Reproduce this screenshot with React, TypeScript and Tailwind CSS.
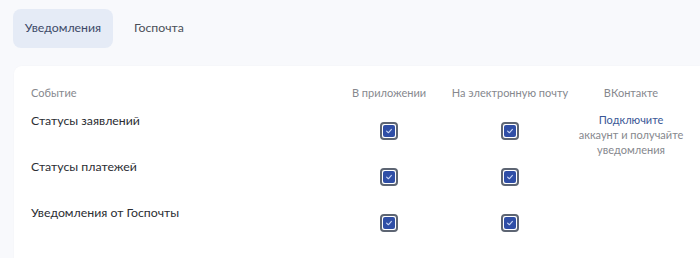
const rows = ['Статусы заявлений', 'Статусы платежей', 'Уведомления от Госпочты'];

function Checkbox() {
  return (
    <span className="flex h-[18px] w-[18px] items-center justify-center rounded-[4px] border-2 border-[#5d6573] bg-white p-[1px]">
      <span className="flex h-full w-full items-center justify-center rounded-[2px] bg-[#2f4ea6]">
        <svg viewBox="0 0 10 10" className="h-[8px] w-[8px]" fill="none">
          <path d="M2 5.2 L4.2 7.2 L8 3" stroke="#c9d6f5" strokeWidth="1.4" strokeLinecap="round" strokeLinejoin="round" />
        </svg>
      </span>
    </span>
  );
}

export default function App() {
  return (
    <div className="h-[258px] w-[700px] overflow-hidden bg-[#f8f9fc] font-['Lato','Noto_Sans',sans-serif]">
      {/* Tabs */}
      <div className="flex gap-[9px] pl-[13px] pt-[9px]">
        <button className="h-[39px] w-[100px] rounded-[8px] bg-[#e5ebf6] text-[12.3px] text-[#3d4a68]">
          Уведомления
        </button>
        <button className="h-[39px] px-[12px] text-[12.3px] text-[#4b4f58]">Госпочта</button>
      </div>

      {/* Card */}
      <div className="ml-[14px] mt-[18px] h-[200px] rounded-tl-[8px] bg-white pl-[17px] pt-[19px] shadow-[0_0_2px_rgba(0,0,0,0.03)]">
        <div className="grid grid-cols-[308px_100px_142px_100px] text-[11px] leading-[16px] text-[#86888e]">
          <div>Событие</div>
          <div className="text-center">В приложении</div>
          <div className="text-center">На электронную почту</div>
          <div className="text-center">ВКонтакте</div>
        </div>

        <div className="mt-[10px]">
          {rows.map((r, i) => (
            <div key={r} className="grid h-[46px] grid-cols-[308px_100px_142px_100px] items-start">
              <div className="text-[12.3px] leading-[20px] text-[#2b2d33]">{r}</div>
              <div className="flex justify-center pt-[11px]">
                <Checkbox />
              </div>
              <div className="flex justify-center pt-[11px]">
                <Checkbox />
              </div>
              <div className="flex flex-col items-center pt-[1px] text-[11px] leading-[15px] whitespace-nowrap">
                {i === 0 && (
                  <>
                    <span className="text-[#3a5796]">Подключите</span>
                    <span className="text-[#86888e]">аккаунт и получайте</span>
                    <span className="text-[#86888e]">уведомления</span>
                  </>
                )}
              </div>
            </div>
          ))}
        </div>
      </div>
    </div>
  );
}
